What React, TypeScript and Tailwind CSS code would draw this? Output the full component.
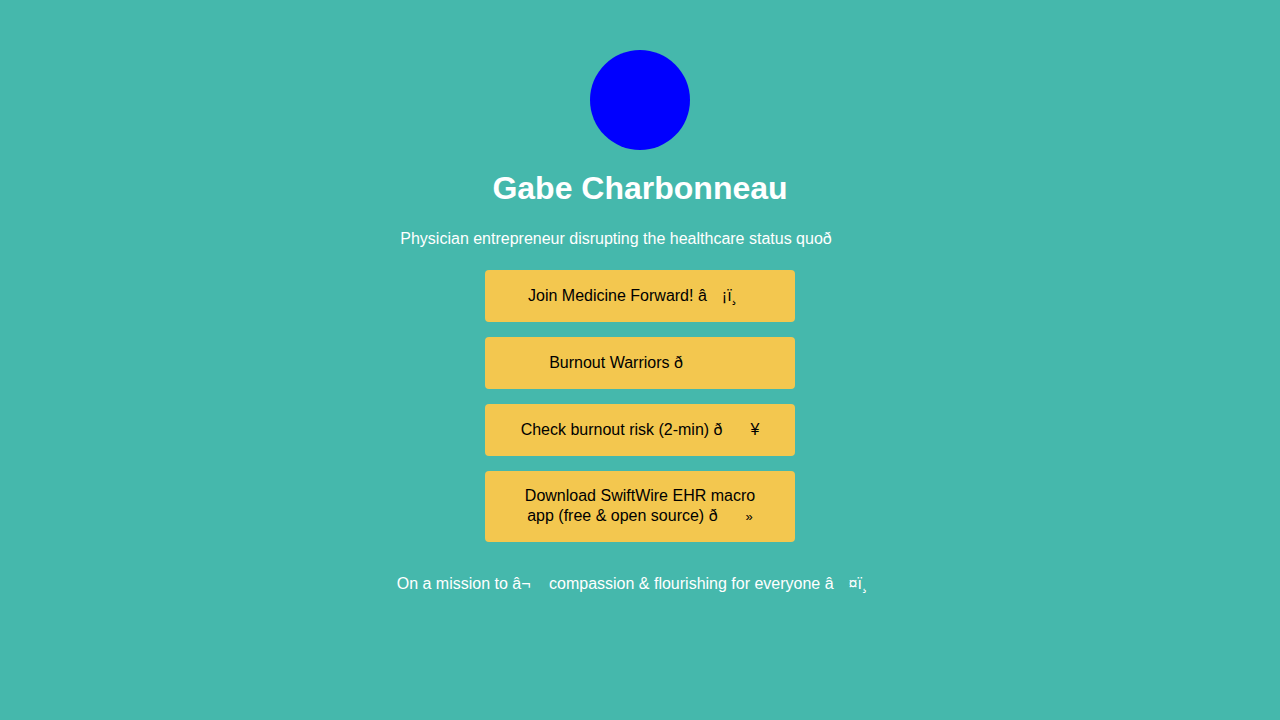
import React from "react";

const C = ({ w = 15 }: { w?: number }) => (
  <span className={w === 15 ? "inline-block w-[15px]" : w === 14 ? "inline-block w-[14px]" : "inline-block w-[16px]"} />
);

const Btn = ({ children }: { children: React.ReactNode }) => (
  <a className="flex min-h-[52px] w-[310px] items-center justify-center rounded-[4px] bg-[#f3c74f] px-[35px] py-[15px] text-center text-[16px] leading-[20px] text-black">
    <span>{children}</span>
  </a>
);

export default function App() {
  return (
    <div
      className="flex min-h-[720px] w-full flex-col items-center bg-[#45b8ac] pt-[50px]"
      style={{ fontFamily: '"Liberation Sans", Arial, Helvetica, sans-serif' }}
    >
      <div className="h-[100px] w-[100px] rounded-full bg-[#0000ff]" />
      <h1 className="mt-[20px] text-[32px] font-bold leading-[37px] text-white">Gabe Charbonneau</h1>
      <p className="mt-[23px] text-[16px] leading-[18px] text-white">
        Physician entrepreneur disrupting the healthcare status quoð
        <C w={16} />
        <C w={16} />
        <C w={16} />
      </p>
      <div className="mt-[22px] flex flex-col gap-[15px]">
        <Btn>
          Join Medicine Forward! â<C />¡ï¸<C />
        </Btn>
        <Btn>
          Burnout Warriors ð<C w={16} />
          <C w={16} />
          <C w={16} />
        </Btn>
        <Btn>
          Check burnout risk (2-min) ð<C w={14} />
          <C w={14} />¥
        </Btn>
        <Btn>
          Download SwiftWire EHR macro app (free &amp; open source) ð<C w={14} />
          <C w={14} />
          <span className="text-[13px]">»</span>
        </Btn>
      </div>
      <p className="mt-[33px] text-[16px] leading-[18px] text-white">
        On a mission to â¬<C w={14} /> compassion &amp; flourishing for everyone â<C />¤ï¸<C w={16} />
      </p>
    </div>
  );
}
